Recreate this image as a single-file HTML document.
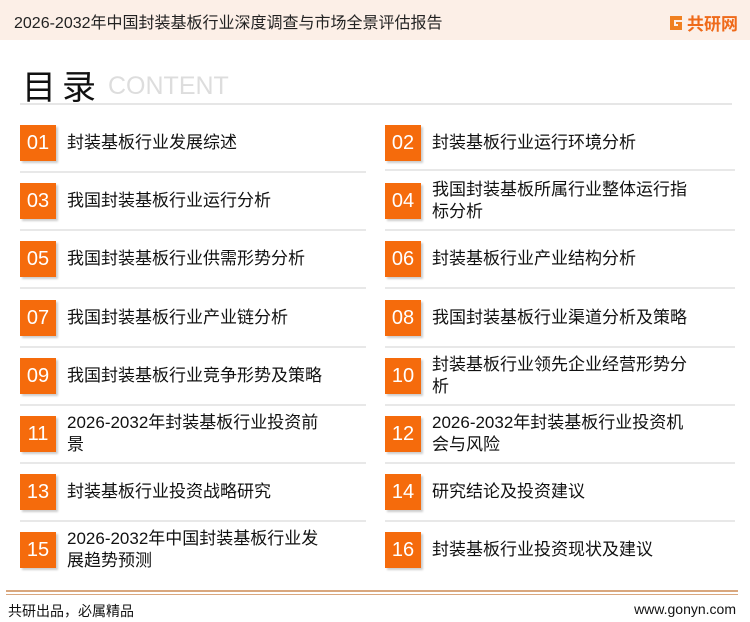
<!DOCTYPE html>
<html><head><meta charset="utf-8"><style>
*{margin:0;padding:0;box-sizing:border-box}
body{width:750px;height:622px;background:#fff;position:relative;overflow:hidden;font-family:"Liberation Sans","Noto Sans CJK SC",sans-serif;color:#111}
.hdr{position:absolute;left:0;top:0;width:750px;height:40px;background:#fcefe7}
.hdr .t{position:absolute;left:14px;top:9px;font-size:16px;color:#222}
.logo{position:absolute;left:667px;top:10px;font-size:17px;font-weight:bold;color:#ef6a1a;display:flex;align-items:center}
.title{position:absolute;left:22px;top:60px;font-size:34px;color:#111;letter-spacing:6px}
.ct{position:absolute;left:108px;top:72px;font-size:25px;color:#ddd}
.hl{position:absolute;left:20px;top:103px;width:712px;height:2px;background:#e6e6e6}
.box{position:absolute;width:36px;height:36px;background:#f56b0c;color:#fff;font-size:20px;text-align:center;line-height:36px;box-shadow:2px 2px 2px rgba(0,0,0,.2)}
.tx{position:absolute;font-size:17px;line-height:22px;color:#111;width:300px;white-space:nowrap}
.ln{position:absolute;height:2px;background:#e8e8e8}
.f1{position:absolute;left:6px;top:590px;width:732px;height:2px;background:#d9a77e}
.f2{position:absolute;left:6px;top:594px;width:732px;height:1px;background:#d9a77e}
.ft{position:absolute;top:601px;font-size:14px;color:#111}
</style></head><body>
<div class="hdr"><div class="t">2026-2032年中国封装基板行业深度调查与市场全景评估报告</div>
<div class="logo"><svg width="18" height="18" viewBox="0 0 18 18"><path d="M3 2h12v4H7v6h4v-2h-2V8h6v8H3z" fill="#f08020"/></svg><span style="margin-left:2px">共研网</span></div></div>
<div class="title">目录</div><div class="ct">CONTENT</div>
<div class="hl"></div>

<div class="box" style="left:20px;top:125px">01</div><div class="tx" style="left:67px;top:132px">封装基板行业发展综述</div>
<div class="box" style="left:385px;top:125px">02</div><div class="tx" style="left:432px;top:132px">封装基板行业运行环境分析</div>
<div class="ln" style="left:20px;top:171px;width:346px"></div><div class="ln" style="left:385px;top:169px;width:350px"></div>

<div class="box" style="left:20px;top:183px">03</div><div class="tx" style="left:67px;top:190px">我国封装基板行业运行分析</div>
<div class="box" style="left:385px;top:183px">04</div><div class="tx" style="left:432px;top:179px">我国封装基板所属行业整体运行指<br>标分析</div>
<div class="ln" style="left:20px;top:229px;width:346px"></div><div class="ln" style="left:385px;top:229px;width:350px"></div>

<div class="box" style="left:20px;top:241px">05</div><div class="tx" style="left:67px;top:248px">我国封装基板行业供需形势分析</div>
<div class="box" style="left:385px;top:241px">06</div><div class="tx" style="left:432px;top:248px">封装基板行业产业结构分析</div>
<div class="ln" style="left:20px;top:287px;width:346px"></div><div class="ln" style="left:385px;top:287px;width:350px"></div>

<div class="box" style="left:20px;top:300px">07</div><div class="tx" style="left:67px;top:307px">我国封装基板行业产业链分析</div>
<div class="box" style="left:385px;top:300px">08</div><div class="tx" style="left:432px;top:307px">我国封装基板行业渠道分析及策略</div>
<div class="ln" style="left:20px;top:346px;width:346px"></div><div class="ln" style="left:385px;top:346px;width:350px"></div>

<div class="box" style="left:20px;top:358px">09</div><div class="tx" style="left:67px;top:365px">我国封装基板行业竞争形势及策略</div>
<div class="box" style="left:385px;top:358px">10</div><div class="tx" style="left:432px;top:354px">封装基板行业领先企业经营形势分<br>析</div>
<div class="ln" style="left:20px;top:404px;width:346px"></div><div class="ln" style="left:385px;top:404px;width:350px"></div>

<div class="box" style="left:20px;top:416px">11</div><div class="tx" style="left:67px;top:412px">2026-2032年封装基板行业投资前<br>景</div>
<div class="box" style="left:385px;top:416px">12</div><div class="tx" style="left:432px;top:412px">2026-2032年封装基板行业投资机<br>会与风险</div>
<div class="ln" style="left:20px;top:462px;width:346px"></div><div class="ln" style="left:385px;top:462px;width:350px"></div>

<div class="box" style="left:20px;top:474px">13</div><div class="tx" style="left:67px;top:481px">封装基板行业投资战略研究</div>
<div class="box" style="left:385px;top:474px">14</div><div class="tx" style="left:432px;top:481px">研究结论及投资建议</div>
<div class="ln" style="left:20px;top:520px;width:346px"></div><div class="ln" style="left:385px;top:520px;width:350px"></div>

<div class="box" style="left:20px;top:532px">15</div><div class="tx" style="left:67px;top:528px">2026-2032年中国封装基板行业发<br>展趋势预测</div>
<div class="box" style="left:385px;top:532px">16</div><div class="tx" style="left:432px;top:539px">封装基板行业投资现状及建议</div>

<div class="f1"></div><div class="f2"></div>
<div class="ft" style="left:8px">共研出品，必属精品</div>
<div class="ft" style="right:14px">www.gonyn.com</div>
</body></html>
